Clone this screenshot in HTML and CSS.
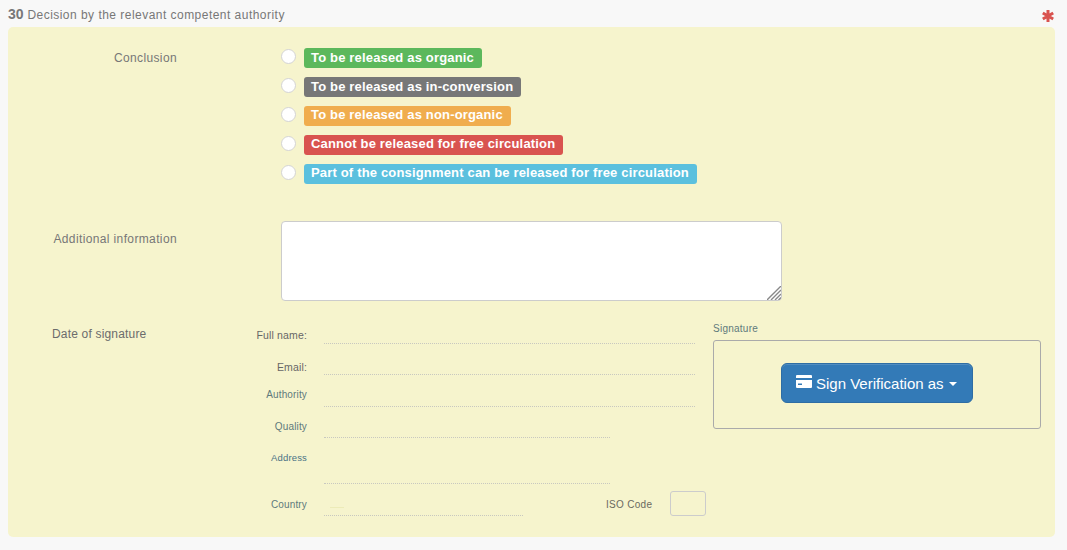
FILE: index.html
```html
<!DOCTYPE html>
<html lang="en">
<head>
<meta charset="utf-8">
<title>Decision</title>
<link rel="stylesheet" href="styles.css">
</head>
<body>
<header class="heading">
  <h2 class="title"><b>30</b> Decision by the relevant competent authority</h2>
  <svg class="required" viewBox="0 0 12 12" width="12" height="12" aria-hidden="true"><path d="M6 0v12M.8 3l10.4 6M.8 9l10.4-6" stroke="#d9534f" stroke-width="3" fill="none"/></svg>
</header>
<main class="panel">
  <section class="row conclusion">
    <div class="row-label">Conclusion</div>
    <div class="options">
      <label class="option"><span class="radio"></span><span class="tag green">To be released as organic</span></label>
      <label class="option"><span class="radio"></span><span class="tag grey">To be released as in-conversion</span></label>
      <label class="option"><span class="radio"></span><span class="tag orange">To be released as non-organic</span></label>
      <label class="option"><span class="radio"></span><span class="tag red">Cannot be released for free circulation</span></label>
      <label class="option"><span class="radio"></span><span class="tag blue">Part of the consignment can be released for free circulation</span></label>
    </div>
  </section>
  <section class="row additional">
    <div class="row-label">Additional information</div>
    <div class="notes-wrap">
      <textarea class="notes"></textarea>
      <svg class="grip" viewBox="0 0 14 14" width="14" height="14" aria-hidden="true"><path d="M0 14 14 0M4 14 14 4M8 14l6-6M11.500 14l2.500-2.500" stroke="#888" stroke-width="1.400" fill="none"/></svg>
    </div>
  </section>
  <section class="signature-row">
    <div class="date-label">Date of signature</div>
    <div class="fields">
      <div class="field f-name"><span class="f-label dark">Full name:</span><span class="f-value"></span></div>
      <div class="field f-email"><span class="f-label dark">Email:</span><span class="f-value"></span></div>
      <div class="field f-authority"><span class="f-label teal">Authority</span><span class="f-value"></span></div>
      <div class="field f-quality"><span class="f-label teal">Quality</span><span class="f-value short"></span></div>
      <div class="field f-address"><span class="f-label blue-text">Address</span><span class="f-value short"></span></div>
      <div class="field f-country">
        <span class="f-label teal">Country</span>
        <span class="f-value tiny"><i class="country-mark"></i></span>
        <span class="iso-label">ISO Code</span>
        <span class="iso-box"></span>
      </div>
    </div>
    <div class="signature">
      <div class="signature-label">Signature</div>
      <div class="signature-box">
        <button class="sign-btn" type="button"><svg class="card" viewBox="0 0 16 13" width="16" height="13" aria-hidden="true"><path fill="#fff" fill-rule="evenodd" d="M1 0h14a1 1 0 0 1 1 1v2H0V1a1 1 0 0 1 1-1zM0 5h16v7a1 1 0 0 1-1 1H1a1 1 0 0 1-1-1zM2 8.500V10h4V8.500z"/></svg><span>Sign Verification as</span><span class="caret"></span></button>
      </div>
    </div>
  </section>
</main>
</body>
</html>
```
FILE: styles.css
```css
* { box-sizing: border-box; }
html, body { height: 100%; }
body {
  margin: 0;
  background: #f8f8f8;
  color: #777;
  font-family: "Liberation Sans", Arial, sans-serif;
  overflow: hidden;
}
.heading {
  display: flex;
  justify-content: space-between;
  align-items: flex-start;
  height: 27px;
  padding: 6px 13px 0 8px;
}
.title {
  margin: 0;
  font-size: 12px;
  font-weight: 400;
  line-height: 16px;
  letter-spacing: .47px;
}
.title b { font-size: 14px; letter-spacing: 0; }
.required { margin-top: 4px; }
.panel {
  margin: 0 12px 0 8px;
  height: 510px;
  background: #f6f4cd;
  border-radius: 5px;
  padding-top: 21px;
}
.row { display: flex; align-items: flex-start; }
.row-label {
  width: 169px;
  margin-right: 104px;
  text-align: right;
  font-size: 12px;
  line-height: 20px;
  color: #777;
  letter-spacing: .37px;
}
.options { display: flex; flex-direction: column; gap: 9px; }
.option { display: flex; align-items: center; gap: 8px; height: 20px; }
.radio {
  flex: none;
  width: 15px;
  height: 15px;
  border-radius: 50%;
  background: #fff;
  border: 1px solid #d4d4d4;
  margin-top: -3px;
}
.tag {
  display: block;
  height: 20px;
  padding: 0 8px 0 7px;
  border-radius: 3px;
  color: #fff;
  font-size: 13px;
  font-weight: 700;
  line-height: 19px;
  letter-spacing: .17px;
  white-space: nowrap;
}
.green { background: #5cb85c; }
.grey { background: #777; }
.orange { background: #f0ad4e; line-height: 17px; }
.red { background: #d9534f; line-height: 17px; }
.blue { background: #5bc0de; line-height: 17px; }
.additional { margin-top: 37px; }
.additional .row-label { margin-top: 8px; }
.notes-wrap { position: relative; width: 501px; height: 80px; }
.notes {
  display: block;
  width: 100%;
  height: 100%;
  background: #fff;
  border: 1px solid #ccc;
  border-radius: 4px;
  margin: 0;
  padding: 6px 12px;
  outline: 0;
  resize: none;
}
.grip { position: absolute; right: 1px; bottom: 1px; }
.signature-row { display: flex; align-items: flex-start; margin-top: 19px; }
.date-label {
  width: 239px;
  padding: 6px 0 0 44px;
  font-size: 12px;
  line-height: 16px;
  color: #6c6c6c;
  letter-spacing: .18px;
}
.fields { width: 459px; margin-top: 7px; font-size: 10px; }
.field { display: flex; line-height: 14px; }
.f-label { width: 60px; text-align: right; letter-spacing: .15px; white-space: nowrap; }
.f-value {
  display: block;
  position: relative;
  width: 371px;
  margin-left: 17px;
  border-bottom: 1px dotted #c8c8c0;
}
.f-value.short { width: 286px; }
.f-value.tiny { width: 199px; }
.dark { color: #666; font-size: 10.500px; }
.teal { color: #5f7a7c; }
.blue-text { color: #4a7285; font-size: 9.500px; }
.f-name .f-label { padding: 1px 0 2px; }
.f-email .f-label { padding: 16px 0 1px; }
.f-authority .f-label { padding: 13px 0 5px; }
.f-quality .f-label { padding: 13px 0 4px; }
.f-address .f-label { padding: 13px 0 19px; }
.f-country { position: relative; }
.f-country .f-label { padding: 14px 0 4px; }
.country-mark {
  position: absolute;
  left: 6px;
  bottom: 7px;
  width: 14px;
  border-bottom: 1px solid #ecebb8;
}
.iso-label {
  margin-left: 83px;
  padding-top: 14px;
  color: #6a6a60;
  letter-spacing: .3px;
  white-space: nowrap;
}
.iso-box {
  position: absolute;
  left: 423px;
  top: 7px;
  width: 36px;
  height: 25px;
  border: 1px solid #ccc;
  border-radius: 3px;
}
.signature { width: 328px; margin-left: 7px; margin-top: 2px; }
.signature-label {
  font-size: 10px;
  line-height: 14px;
  color: #5f7a7c;
  letter-spacing: .25px;
  margin-bottom: 4px;
}
.signature-box {
  display: flex;
  justify-content: center;
  align-items: center;
  height: 89px;
  padding-bottom: 3px;
  border: 1px solid #aaa;
  border-radius: 3px;
}
.sign-btn {
  display: flex;
  align-items: center;
  justify-content: flex-start;
  width: 192px;
  height: 40px;
  padding: 2px 0 0 14px;
  background: #337ab7;
  border: 1px solid #2e6da4;
  border-radius: 6px;
  box-shadow: inset 0 1px 0 rgba(255, 255, 255, .15);
  color: #fff;
  font: 400 15px/20px "Liberation Sans", Arial, sans-serif;
  white-space: nowrap;
}
.card { margin: -6px 4px 0 0; }
.caret {
  width: 0;
  height: 0;
  margin-left: 5px;
  border-top: 4px solid #fff;
  border-left: 4px solid transparent;
  border-right: 4px solid transparent;
}
```
